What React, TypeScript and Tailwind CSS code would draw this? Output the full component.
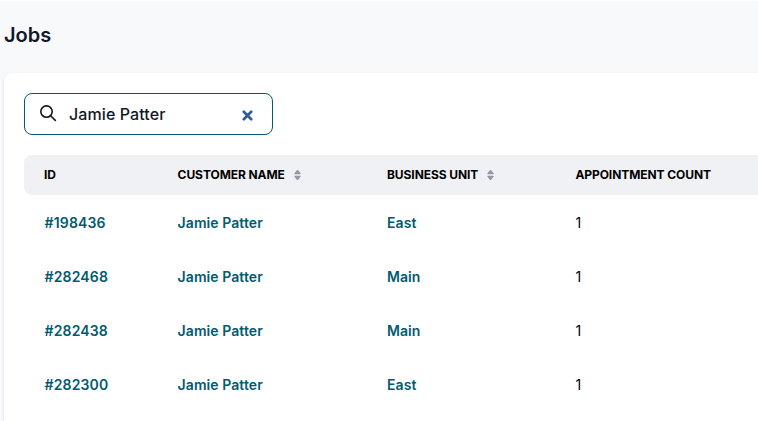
const rows = [
  ["#198436", "East"],
  ["#282468", "Main"],
  ["#282438", "Main"],
  ["#282300", "East"],
];

function Sort() {
  return (
    <svg width="7" height="10" viewBox="0 0 8 10" preserveAspectRatio="none" className="ml-[9px]" fill="#9499a9">
      <path d="M4 0Q4.5 0 5 .6L7.5 3.3Q8 4.2 7 4.2H1Q0 4.2 .5 3.3L3 .6Q3.5 0 4 0ZM4 10Q3.5 10 3 9.4L.5 6.7Q0 5.8 1 5.8H7Q8 5.8 7.5 6.7L5 9.4Q4.5 10 4 10Z" />
    </svg>
  );
}

export default function App() {
  return (
    <div className="h-[421px] w-[758px] overflow-hidden border-t border-white bg-[#f8f9fb] font-['Inter',sans-serif] text-[#111827]">
      <h1 className="h-[72px] pt-[19px] pl-[4px] text-[20px] leading-[30px] font-semibold">Jobs</h1>
      <main className="ml-[4px] h-[348px] rounded-tl-lg bg-white pt-5 pl-5 shadow-sm">
        <div className="flex h-[42px] w-[249px] items-center rounded-lg border border-[#025a70] pl-[15px]">
          <svg width="17" height="17" viewBox="0 0 17 17" fill="none" stroke="#101820" strokeWidth="1.6" className="-mt-[2px]">
            <circle cx="6.5" cy="6.6" r="5.7" />
            <path d="m10.6 10.7 5.2 5.2" />
          </svg>
          <span className="ml-[12px] w-[173px] text-[16px] leading-6 font-medium tracking-[0.006em]">Jamie Patter</span>
          <svg width="11" height="11" viewBox="0 0 11 11" fill="none" stroke="#315c99" strokeWidth="2.7" strokeLinecap="round" className="mt-[2px]">
            <path d="m1.8 1.8 7.4 7.4M9.2 1.8 1.8 9.2" />
          </svg>
        </div>
        <div className="mt-5 grid h-10 grid-cols-[133.6px_209.4px_188.4px_1fr] items-center rounded-l-lg bg-[#f0f1f5] pl-5 text-[12px] font-bold tracking-[-0.006em] text-black">
          <span>ID</span>
          <span className="flex items-center">CUSTOMER NAME<Sort /></span>
          <span className="flex items-center">BUSINESS UNIT<Sort /></span>
          <span>APPOINTMENT COUNT</span>
        </div>
        <div className="pt-[1px]">
          {rows.map(([id, unit]) => (
            <div key={id} className="grid h-[54px] grid-cols-[133.6px_209.4px_188.4px_1fr] items-center pl-5 text-[14px] leading-5 font-semibold tracking-[0.005em] text-[#025a70]">
              <span className="pl-[0.6px] tracking-[0.01em]">{id}</span>
              <span>Jamie Patter</span>
              <span>{unit}</span>
              <span className="font-normal text-black">1</span>
            </div>
          ))}
        </div>
      </main>
    </div>
  );
}
